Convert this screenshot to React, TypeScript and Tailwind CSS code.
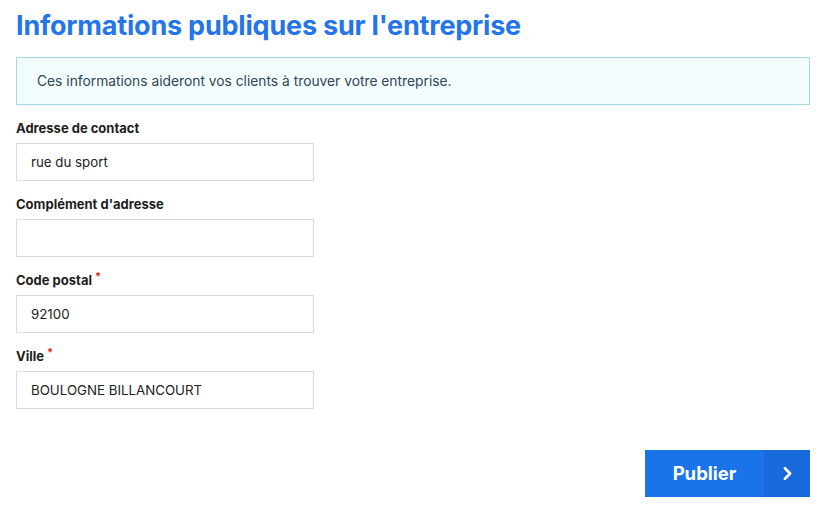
import { ChevronRight } from 'lucide-react';

const fields = [
  { label: 'Adresse de contact', value: 'rue du sport', required: false },
  { label: "Complément d'adresse", value: '', required: false },
  { label: 'Code postal', value: '92100', required: true },
  { label: 'Ville', value: 'BOULOGNE BILLANCOURT', required: true },
];

export default function App() {
  return (
    <div className="min-h-[513px] w-[825px] bg-white pl-4 pr-[15px] pt-[9px] font-['Inter','Noto_Sans',sans-serif] text-[#222]">
      <h1 className="text-[27px] font-bold leading-[34px] tracking-[-0.2px] text-[#2474ea]">
        Informations publiques sur l'entreprise
      </h1>

      <div className="mt-[14px] flex h-[48px] items-center border border-[#a8d8df] bg-[#f4fdfe] px-5">
        <p className="text-[13.8px] text-[#2e4656]">
          Ces informations aideront vos clients à trouver votre entreprise.
        </p>
      </div>

      <form className="mt-[14px] flex flex-col gap-[14px]">
        {fields.map((f) => (
          <div key={f.label} className="flex flex-col">
            <label className="flex h-[18px] items-start text-[13px] font-bold leading-[18px] text-[#1e1e1e]">
              {f.label}
              {f.required && <span className="ml-[3px] -mt-[4px] text-[11px] text-[#e02424]">*</span>}
            </label>
            <input
              readOnly
              value={f.value}
              className="mt-[6px] h-[38px] w-[298px] border border-[#dcdcdc] px-[14px] text-[13.3px] text-[#222] outline-none"
            />
          </div>
        ))}
      </form>

      <div className="mt-[41px] flex justify-end">
        <button
          type="button"
          className="flex h-[47px] w-[165px] items-stretch bg-[#1a73e8] text-white"
        >
          <span className="flex flex-1 items-center justify-center text-[18.5px] font-bold">Publier</span>
          <span className="flex w-[46px] items-center justify-center bg-[#1869dc]">
            <ChevronRight size={21} strokeWidth={3} />
          </span>
        </button>
      </div>
    </div>
  );
}
